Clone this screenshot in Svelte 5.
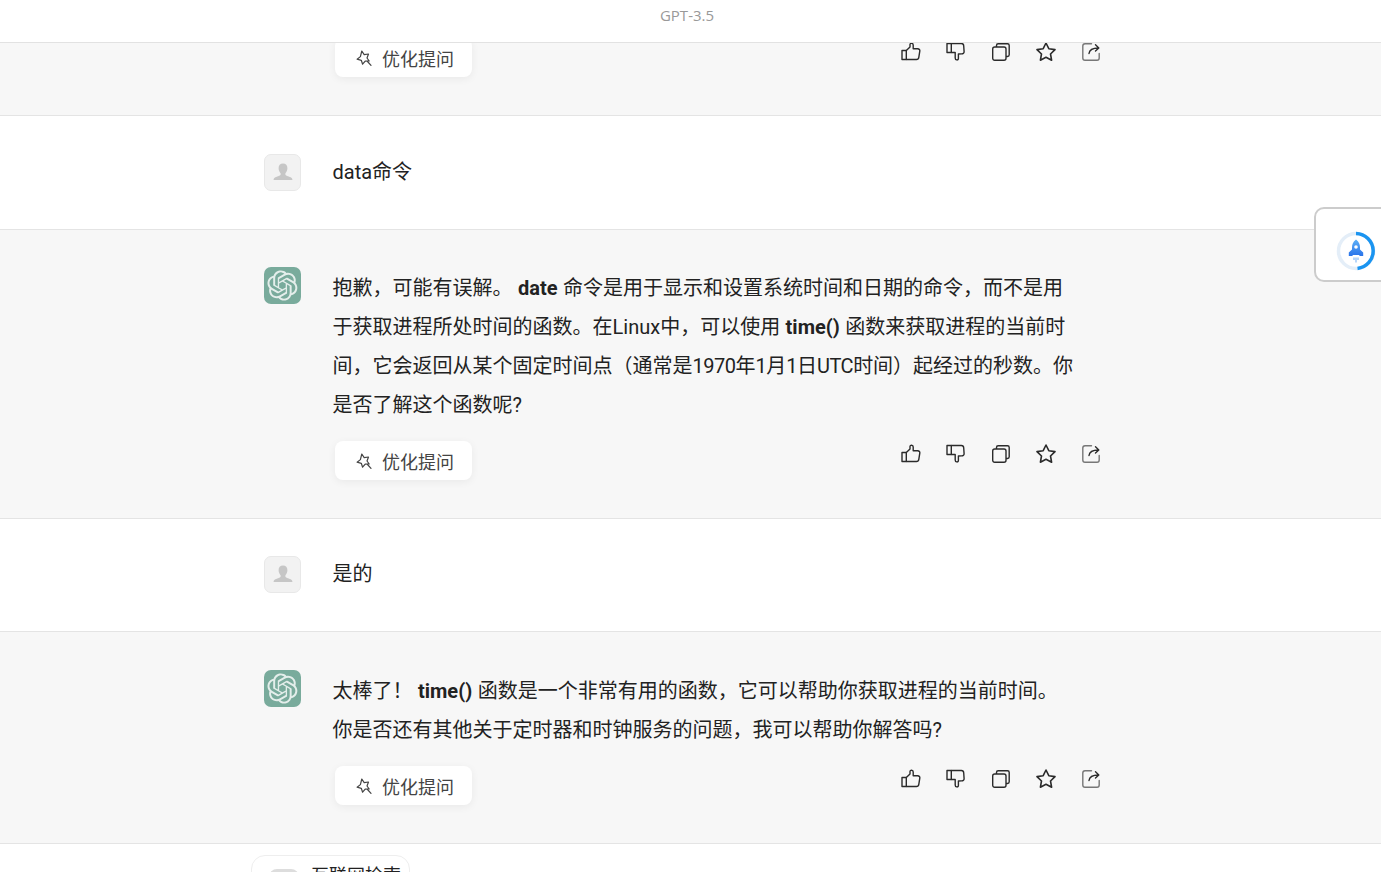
<script>
  const logo = "M37.5324 16.8707C37.9808 15.5241 38.1363 14.0974 37.9886 12.6859C37.8409 11.2744 37.3934 9.91076 36.676 8.68622C35.6126 6.83404 33.9882 5.3676 32.0373 4.4985C30.0864 3.62941 27.9098 3.40259 25.8215 3.85078C24.8796 2.7893 23.7219 1.94125 22.4257 1.36341C21.1295 0.785575 19.7249 0.491269 18.3058 0.500197C16.1708 0.495044 14.0893 1.16803 12.3614 2.42214C10.6335 3.67624 9.34853 5.44666 8.6917 7.47815C7.30085 7.76286 5.98686 8.3414 4.8377 9.17505C3.68854 10.0087 2.73073 11.0782 2.02839 12.312C0.956464 14.1591 0.498905 16.2988 0.721698 18.4228C0.944492 20.5467 1.83612 22.5449 3.268 24.1293C2.81966 25.4759 2.66413 26.9026 2.81182 28.3141C2.95951 29.7256 3.40701 31.0892 4.12437 32.3138C5.18791 34.1659 6.8123 35.6322 8.76321 36.5013C10.7141 37.3704 12.8907 37.5973 14.9789 37.1492C15.9208 38.2107 17.0786 39.0587 18.3747 39.6366C19.6709 40.2144 21.0755 40.5087 22.4946 40.4998C24.6307 40.5054 26.7133 39.8321 28.4418 38.5772C30.1704 37.3223 31.4556 35.5506 32.1119 33.5179C33.5027 33.2332 34.8167 32.6547 35.9659 31.821C37.115 30.9874 38.0728 29.9178 38.7752 28.684C39.8458 26.8371 40.3023 24.6979 40.0789 22.5748C39.8556 20.4517 38.9639 18.4544 37.5324 16.8707ZM22.4978 37.8849C20.7443 37.8874 19.0459 37.2733 17.6994 36.1501C17.7601 36.117 17.8666 36.0586 17.936 36.0161L25.9004 31.4156C26.1003 31.3019 26.2663 31.137 26.3813 30.9378C26.4964 30.7386 26.5563 30.5124 26.5549 30.2825V19.0542L29.9213 20.998C29.9389 21.0068 29.9541 21.0198 29.9656 21.0359C29.977 21.052 29.9842 21.0707 29.9867 21.0902V30.3889C29.9842 32.375 29.1946 34.2791 27.7909 35.6841C26.3872 37.0892 24.4838 37.8806 22.4978 37.8849ZM6.39227 31.0064C5.51397 29.4888 5.19742 27.7107 5.49804 25.9832C5.55718 26.0187 5.66048 26.0818 5.73461 26.1244L13.699 30.7248C13.8975 30.8408 14.1233 30.902 14.3532 30.902C14.583 30.902 14.8088 30.8408 15.0073 30.7248L24.731 25.1103V28.9979C24.7321 29.0177 24.7283 29.0376 24.7199 29.0556C24.7115 29.0736 24.6988 29.0893 24.6829 29.1012L16.6317 33.7497C14.9096 34.7416 12.8643 35.0097 10.9447 34.4954C9.02506 33.9811 7.38785 32.7263 6.39227 31.0064ZM4.29707 13.6194C5.17156 12.0998 6.55279 10.9364 8.19885 10.3327C8.19885 10.4013 8.19491 10.5228 8.19491 10.6071V19.808C8.19351 20.0378 8.25334 20.2638 8.36823 20.4629C8.48312 20.6619 8.64893 20.8267 8.84863 20.9404L18.5723 26.5542L15.206 28.4979C15.1894 28.5089 15.1703 28.5155 15.1505 28.5173C15.1307 28.5191 15.1107 28.516 15.0924 28.5082L7.04046 23.8557C5.32135 22.8601 4.06716 21.2235 3.55289 19.3046C3.03862 17.3858 3.30624 15.3413 4.29707 13.6194ZM31.955 20.0556L22.2312 14.4411L25.5976 12.4981C25.6142 12.4872 25.6333 12.4805 25.6531 12.4787C25.6729 12.4769 25.6928 12.4801 25.7111 12.4879L33.7631 17.1364C34.9967 17.849 36.0017 18.8982 36.6606 20.1613C37.3194 21.4244 37.6047 22.849 37.4832 24.2684C37.3617 25.6878 36.8382 27.0432 35.9743 28.1759C35.1103 29.3086 33.9415 30.1717 32.6047 30.6641C32.6047 30.5947 32.6047 30.4733 32.6047 30.3889V21.188C32.6066 20.9586 32.5474 20.7328 32.4332 20.5338C32.319 20.3348 32.154 20.1698 31.955 20.0556ZM35.3055 15.0128C35.2464 14.9765 35.1431 14.9142 35.069 14.8717L27.1045 10.2712C26.906 10.1554 26.6803 10.0943 26.4504 10.0943C26.2206 10.0943 25.9948 10.1554 25.7963 10.2712L16.0726 15.8858V11.9982C16.0715 11.9783 16.0753 11.9585 16.0837 11.9405C16.0921 11.9225 16.1048 11.9068 16.1207 11.8949L24.1719 7.25025C25.4053 6.53903 26.8158 6.19376 28.2383 6.25482C29.6608 6.31589 31.0364 6.78077 32.2044 7.59508C33.3723 8.40939 34.2842 9.53945 34.8334 10.8531C35.3826 12.1667 35.5464 13.6095 35.3055 15.0128ZM14.2424 21.9419L10.8752 19.9981C10.8576 19.9893 10.8423 19.9763 10.8309 19.9602C10.8195 19.9441 10.8122 19.9254 10.8098 19.9058V10.6071C10.8107 9.18295 11.2173 7.78848 11.9819 6.58696C12.7466 5.38544 13.8377 4.42659 15.1275 3.82264C16.4173 3.21869 17.8524 2.99464 19.2649 3.1767C20.6775 3.35876 22.0089 3.93941 23.1034 4.85067C23.0427 4.88379 22.937 4.94215 22.8668 4.98473L14.9024 9.58517C14.7025 9.69878 14.5366 9.86356 14.4215 10.0626C14.3065 10.2616 14.2466 10.4877 14.2479 10.7175L14.2424 21.9419ZM16.071 17.9991L20.4018 15.4978L24.7325 17.9975V22.9985L20.4018 25.4983L16.071 22.9985V17.9991Z"
</script>

{#snippet toolbar()}
  <div class="toolbar">
    <button class="optimize">
      <svg width="20" height="20" viewBox="0 0 20 20" fill="none" stroke="#444" stroke-width="1.2" stroke-linejoin="round">
        <path d="M7.800 3 10.200 6.700l4.300-.7-1.500 4 2.200 3-4 .2-2.600 3-1.300-3.900-4.200-1.100 3.300-2.600z"/>
        <path d="M13.500 13.500 17 17.300" stroke-linecap="round"/>
      </svg>
      <span>优化提问</span>
    </button>
    <div class="actions">
      <svg width="20" height="20" viewBox="0 0 20 20" fill="none" stroke="#2b2b2b" stroke-width="1.4" stroke-linejoin="round">
        <path d="M1 8.500h4.300v9H1z"/>
        <path d="M5.300 8.500 9 5V2.500c0-1.800 3.200-1.800 3.200.6v3.700h4.500c1.500 0 2.400 1 2.100 2.300l-1 6.300c-.2 1.300-1 2.100-2.300 2.100H5.300"/>
      </svg>
      <svg width="20" height="20" viewBox="0 0 20 20" fill="none" stroke="#2b2b2b" stroke-width="1.4" stroke-linejoin="round">
        <path d="M1 1.500h4.300v9H1z"/>
        <path d="M5.300 10.500h3.900v5.400c0 2.600 3.200 2.600 3.200.6V12l3.300-.1c1.500 0 2.500-1 2.400-2.300l-.4-5.900c-.1-1.400-1-2.200-2.300-2.200H5.300"/>
      </svg>
      <svg width="20" height="20" viewBox="0 0 20 20" fill="none" stroke="#2b2b2b" stroke-width="1.4" stroke-linejoin="round">
        <rect x="1.700" y="5" width="13.300" height="13.300" rx="2"/>
        <path d="M5.500 5V3.500c0-1 .7-1.700 1.700-1.700h9.300c1 0 1.700.7 1.700 1.700v9.300c0 1-.7 1.700-1.700 1.700H15"/>
      </svg>
      <svg width="20" height="20" viewBox="0 0 20 20" fill="none" stroke="#2b2b2b" stroke-width="1.6" stroke-linejoin="round">
        <path d="M10 1 12.800 6.700l6.200.9-4.500 4.400 1.100 6.200L10 15.300l-5.600 2.900L5.500 12 1 7.600l6.200-.9z"/>
      </svg>
      <svg width="20" height="20" viewBox="0 0 20 20" fill="none" stroke-width="1.4" stroke-linecap="round" stroke-linejoin="round">
        <path d="M10.500 1.800H4C2.700 1.800 1.800 2.700 1.800 4v12c0 1.300.9 2.200 2.200 2.200h12c1.300 0 2.200-.9 2.200-2.200v-4.500" stroke="#777"/>
        <path d="M8 11.500c.4-3.500 3-5.500 9.500-5.500M14.500 2.800 17.800 6l-3.300 3" stroke="#2b2b2b"/>
      </svg>
    </div>
  </div>
{/snippet}

{#snippet botAvatar()}
  <div class="avatar bot">
    <svg width="31" height="31" viewBox="0 0 41 41" fill="#fff" opacity=".8"><path d={logo}/></svg>
  </div>
{/snippet}

{#snippet userAvatar()}
  <div class="avatar user">
    <svg width="22" height="22" viewBox="0 0 22 22" fill="#c6c6c6">
      <path d="M11 1.500c2.900 0 4.400 2 4.400 4.800 0 2-.9 3.900-2 4.900v1.500c0 1 4.400 1.900 6 3 .7.500 1 1.100 1 2.300H1.600c0-1.200.3-1.800 1-2.300 1.600-1.100 6-2 6-3v-1.500c-1.100-1-2-2.900-2-4.900C6.600 3.500 8.100 1.500 11 1.500z"/>
    </svg>
  </div>
{/snippet}

<div class="page">
  <header class="top"><span>GPT-3.5</span></header>

  <section class="row gray first">
    <div class="inner">
      <div class="spacer"></div>
      <div class="body">{@render toolbar()}</div>
    </div>
  </section>

  <section class="row ask pad-38">
    <div class="inner">
      {@render userAvatar()}
      <div class="body"><p class="text">data命令</p></div>
    </div>
  </section>

  <section class="row gray">
    <div class="inner">
      {@render botAvatar()}
      <div class="body">
        <p class="text">抱歉，可能有误解。 <strong>date</strong> 命令是用于显示和设置系统时间和日期的命令，而不是用于获取进程所处时间的函数。在Linux中，可以使用 <strong>time()</strong> 函数来获取进程的当前时间，它会返回从某个固定时间点（通常是<span class="tight">1970</span>年<span class="tight">1</span>月<span class="tight">1</span>日<span class="tight">UTC</span>时间）起经过的秒数。你是否了解这个函数呢?</p>
        {@render toolbar()}
      </div>
    </div>
  </section>

  <section class="row ask">
    <div class="inner">
      {@render userAvatar()}
      <div class="body"><p class="text">是的</p></div>
    </div>
  </section>

  <section class="row gray pad-38">
    <div class="inner">
      {@render botAvatar()}
      <div class="body">
        <p class="text">太棒了！ <strong>time()</strong> 函数是一个非常有用的函数，它可以帮助你获取进程的当前时间。<br>你是否还有其他关于定时器和时钟服务的问题，我可以帮助你解答吗?</p>
        {@render toolbar()}
      </div>
    </div>
  </section>

  <div class="plugin-card">
    <span class="chip"></span>
    <span class="plugin-name">互联网检索</span>
  </div>

  <aside class="float">
    <svg width="40" height="40" viewBox="0 0 40 40">
      <defs>
        <linearGradient id="rocket" x1="0" y1="0" x2="0" y2="1">
          <stop offset="0" stop-color="#5cb0f7"/>
          <stop offset="1" stop-color="#2a74ea"/>
        </linearGradient>
      </defs>
      <circle cx="20" cy="20" r="17.500" fill="none" stroke="#e4eef8" stroke-width="3.500"/>
      <path d="M20 2.500A17.500 17.500 0 0 1 21.500 37.400" fill="none" stroke="#1a94f0" stroke-width="3.500"/>
      <path d="M20 8.500c3 2.400 4 5 4 8v2l3.200 3v3.500h-3.400l-.8-1h-6l-.8 1h-3.400v-3.500l3.200-3v-2c0-3 1-5.600 4-8z" fill="url(#rocket)"/>
      <circle cx="20" cy="16" r="1.800" fill="#fff"/>
      <path d="M18 26.500v2.500M20 26.500v5M22 26.500v2.500" stroke="#7db4f5" stroke-width="1.100"/>
    </svg>
  </aside>
</div>

<style>
  :global(body) { background: #fff; }
  .page {
    position: relative; height: 872px; overflow: hidden;
    font-family: "Roboto", "Noto Sans CJK SC", sans-serif; color: #222;
  }
  .top {
    position: relative; z-index: 2; height: 42px; background: #fff;
    border-bottom: 1px solid #e2e2e2; text-align: center; padding-right: 7px;
    font-size: 15px; line-height: 30px; color: #999; font-family: "Open Sans", sans-serif;
  }
  .row { padding: 37px 0 38px; border-bottom: 1px solid #e4e4e4; }
  .row.pad-38 { padding-top: 38px; }
  .row.gray { background: #f7f7f7; }
  .row.first { margin-top: -5px; padding: 0 0 38px; }
  .inner { display: flex; gap: 32px; width: 853px; margin: 0 auto; }
  .spacer { width: 37px; flex-shrink: 0; }
  .avatar {
    width: 37px; height: 37px; flex-shrink: 0; border-radius: 7px;
    display: flex; align-items: center; justify-content: center;
  }
  .avatar.bot { background: #79ab9c; }
  .avatar.user { background: #f2f2f2; border: 1px solid #e8e8e8; box-sizing: border-box; }
  .body { width: 768px; }
  .text { margin: 0; padding-top: 2px; max-width: 749px; font-size: 20px; line-height: 39px; margin-left: -0.5px; }
  .ask .text { padding-top: 0; height: 37px; margin-top: -1px; }
  .text strong { font-weight: 700; padding: 0 0.5px; }
  .tight { letter-spacing: -0.5px; }
  .toolbar { display: flex; align-items: center; justify-content: space-between; margin-top: 16px; padding-left: 2px; }
  .first .toolbar { margin-top: 0; }
  .optimize {
    display: flex; align-items: center; gap: 8px;
    width: 137px; height: 39px; padding: 0 0 0 19px; box-sizing: border-box;
    background: #fff; border: none; border-radius: 8px;
    box-shadow: 0 2px 8px rgba(0,0,0,0.06);
    font: inherit; font-size: 18px; color: #444;
  }
  .actions { display: flex; gap: 25px; margin-bottom: 14px; }
  .first .actions { margin-bottom: 12px; }
  .plugin-card {
    display: flex; align-items: flex-start; gap: 12px;
    width: 159px; height: 60px; box-sizing: border-box; margin: 11px 0 0 251px; padding: 13px 0 0 17px;
    border: 1px solid #eee; border-radius: 14px; background: #fff; font-size: 18px;
  }
  .plugin-name { line-height: 20px; margin-top: -3px; }
  .chip { width: 30px; height: 24px; border-radius: 8px; background: #ddd; }
  .float {
    position: absolute; top: 207px; right: -12px; width: 79px; height: 75px; box-sizing: border-box;
    display: flex; align-items: center; padding: 12px 0 0 20px;
    background: #fff; border: 2px solid #ccc; border-radius: 10px; z-index: 3;
  }
</style>
